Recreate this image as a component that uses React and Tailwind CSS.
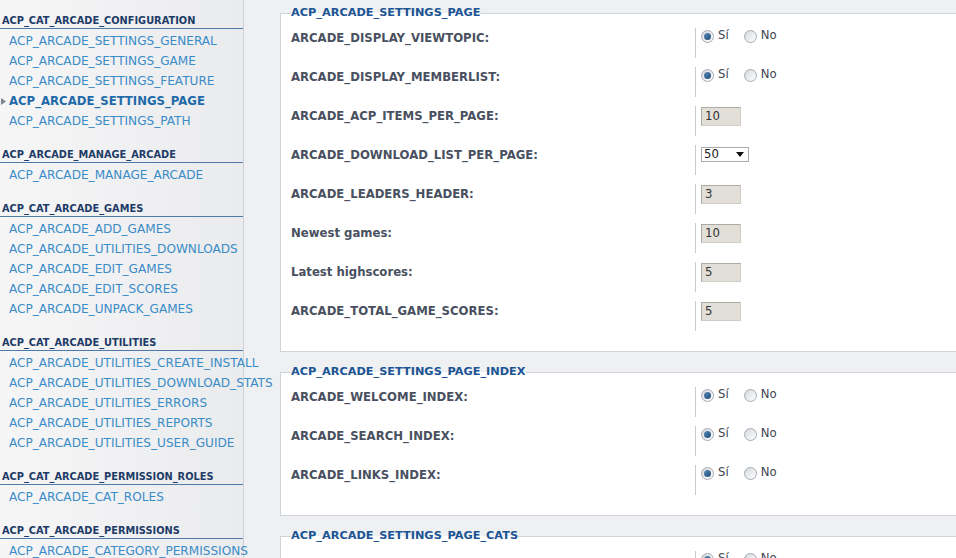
import React from "react";

const menu = [
  {
    title: "ACP_CAT_ARCADE_CONFIGURATION",
    items: [
      "ACP_ARCADE_SETTINGS_GENERAL",
      "ACP_ARCADE_SETTINGS_GAME",
      "ACP_ARCADE_SETTINGS_FEATURE",
      "ACP_ARCADE_SETTINGS_PAGE",
      "ACP_ARCADE_SETTINGS_PATH",
    ],
  },
  { title: "ACP_ARCADE_MANAGE_ARCADE", items: ["ACP_ARCADE_MANAGE_ARCADE"] },
  {
    title: "ACP_CAT_ARCADE_GAMES",
    items: [
      "ACP_ARCADE_ADD_GAMES",
      "ACP_ARCADE_UTILITIES_DOWNLOADS",
      "ACP_ARCADE_EDIT_GAMES",
      "ACP_ARCADE_EDIT_SCORES",
      "ACP_ARCADE_UNPACK_GAMES",
    ],
  },
  {
    title: "ACP_CAT_ARCADE_UTILITIES",
    items: [
      "ACP_ARCADE_UTILITIES_CREATE_INSTALL",
      "ACP_ARCADE_UTILITIES_DOWNLOAD_STATS",
      "ACP_ARCADE_UTILITIES_ERRORS",
      "ACP_ARCADE_UTILITIES_REPORTS",
      "ACP_ARCADE_UTILITIES_USER_GUIDE",
    ],
  },
  { title: "ACP_CAT_ARCADE_PERMISSION_ROLES", items: ["ACP_ARCADE_CAT_ROLES"] },
  { title: "ACP_CAT_ARCADE_PERMISSIONS", items: ["ACP_ARCADE_CATEGORY_PERMISSIONS"] },
];

const active = "ACP_ARCADE_SETTINGS_PAGE";

const sections = [
  {
    legend: "ACP_ARCADE_SETTINGS_PAGE",
    rows: [
      { label: "ARCADE_DISPLAY_VIEWTOPIC:", type: "radio" },
      { label: "ARCADE_DISPLAY_MEMBERLIST:", type: "radio" },
      { label: "ARCADE_ACP_ITEMS_PER_PAGE:", type: "text", value: "10" },
      { label: "ARCADE_DOWNLOAD_LIST_PER_PAGE:", type: "select", value: "50" },
      { label: "ARCADE_LEADERS_HEADER:", type: "text", value: "3" },
      { label: "Newest games:", type: "text", value: "10" },
      { label: "Latest highscores:", type: "text", value: "5" },
      { label: "ARCADE_TOTAL_GAME_SCORES:", type: "text", value: "5" },
    ],
  },
  {
    legend: "ACP_ARCADE_SETTINGS_PAGE_INDEX",
    rows: [
      { label: "ARCADE_WELCOME_INDEX:", type: "radio" },
      { label: "ARCADE_SEARCH_INDEX:", type: "radio" },
      { label: "ARCADE_LINKS_INDEX:", type: "radio" },
    ],
  },
  {
    legend: "ACP_ARCADE_SETTINGS_PAGE_CATS",
    rows: [{ label: "", type: "radio" }],
  },
];

function Radio({ checked }) {
  return (
    <span className="flex h-[13px] w-[13px] items-center justify-center rounded-full border border-[#a4abb3] bg-gradient-to-br from-[#d6d9dc] to-[#ffffff]">
      {checked && (
        <span className="h-[7px] w-[7px] rounded-full bg-gradient-to-br from-[#5a8ab8] to-[#1f4c78]" />
      )}
    </span>
  );
}

function Field({ row }) {
  if (row.type === "radio") {
    return (
      <div className="flex h-[16px] items-center text-[11.7px] text-[#3d4450]">
        <Radio checked />
        <span className="ml-[4px]">Sí</span>
        <span className="ml-[15px]">
          <Radio />
        </span>
        <span className="ml-[4px]">No</span>
      </div>
    );
  }
  if (row.type === "select") {
    return (
      <div className="mt-[2px] flex h-[15px] w-[48px] items-center justify-between border border-[#a5acb2] bg-white pl-[2px] pr-[4px] text-[11.7px] leading-none text-[#222]">
        <span>{row.value}</span>
        <svg width="8" height="5" viewBox="0 0 8 5">
          <path d="M0 0h8L4 5z" fill="#111" />
        </svg>
      </div>
    );
  }
  return (
    <div className="mt-[1px] flex h-[19px] w-[40px] items-center border border-t-[#aeaba3] border-l-[#aeaba3] border-r-[#d0cdc6] border-b-[#d0cdc6] bg-[#e2dfd8] pl-[3px] text-[11.7px] text-[#333]">
      {row.value}
    </div>
  );
}

export default function App() {
  return (
    <div
      className="flex h-[558px] w-[956px] overflow-hidden bg-[#eef0f1]"
      style={{ fontFamily: '"DejaVu Sans", Verdana, sans-serif' }}
    >
      <div className="w-[244px] shrink-0 border-r border-[#cfd3d8] bg-gradient-to-r from-[#f6f6f7] to-[#eaebed] pt-[14px]">
        {menu.map((group) => (
          <div key={group.title} className="mb-[17px]">
            <div className="border-b border-[#4f7aa6] pl-[2px] text-[9.8px] font-bold leading-[14px] text-[#1d3b66]">
              {group.title}
            </div>
            <div className="mt-[2px]">
              {group.items.map((item) =>
                item === active ? (
                  <div key={item} className="relative h-[20px] whitespace-nowrap pl-[9px] text-[11.7px] font-bold leading-[20px] text-[#1f6aa8]">
                    <svg className="absolute left-[1px] top-[7px]" width="6" height="7" viewBox="0 0 6 7">
                      <path d="M0 0l5 3.5L0 7z" fill="#7d8590" />
                    </svg>
                    {item}
                  </div>
                ) : (
                  <div key={item} className="h-[20px] whitespace-nowrap pl-[9px] text-[12.1px] leading-[20px] text-[#3a8cc8]">
                    {item}
                  </div>
                )
              )}
            </div>
          </div>
        ))}
      </div>

      <div className="min-w-0 flex-1 overflow-hidden pl-[36px] pt-[5px]">
        {sections.map((s) => (
          <fieldset
            key={s.legend}
            className="mb-[12px] w-[720px] border border-[#cfd2d6] bg-white pb-[11px] pl-[10px] pt-[7px]"
          >
            <legend className="text-[11.3px] font-bold leading-[16px] text-[#1c5494]">
              {s.legend}
            </legend>
            {s.rows.map((row, i) => (
              <div key={i} className="flex h-[39px] items-start">
                <div className="w-[404px] shrink-0 pt-[3px] text-[11.7px] font-bold leading-[14px] text-[#49505f]">
                  {row.label}
                </div>
                <div className="h-[30px] flex-1 border-l border-[#c9cbce] pl-[5px]">
                  <Field row={row} />
                </div>
              </div>
            ))}
          </fieldset>
        ))}
      </div>
    </div>
  );
}
